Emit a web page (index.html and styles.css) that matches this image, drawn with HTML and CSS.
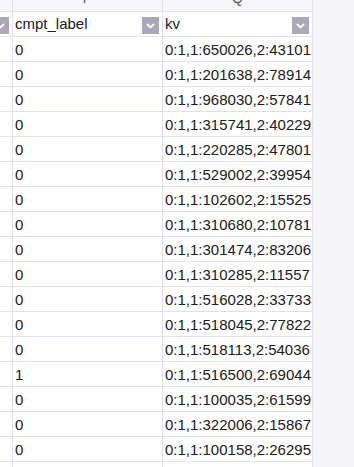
FILE: index.html
```html
<!DOCTYPE html>
<html>
<head>
<meta charset="utf-8">
<link rel="stylesheet" href="styles.css">
</head>
<body>
<div class="sheet">
  <div class="cell letter"></div>
  <div class="cell letter"><span>P</span></div>
  <div class="cell letter"><span>Q</span></div>
  <div class="blank"></div>

  <div class="cell head head-o"><span class="btn"><svg viewBox="0 0 17 17"><path d="M5 7 L8.5 10.5 L12 7" /></svg></span></div>
  <div class="cell head"><span class="label">cmpt_label</span><span class="btn"><svg viewBox="0 0 17 17"><path d="M5 7 L8.5 10.5 L12 7" /></svg></span></div>
  <div class="cell head"><span class="label">kv</span><span class="btn"><svg viewBox="0 0 17 17"><path d="M5 7 L8.5 10.5 L12 7" /></svg></span></div>
  <div class="blank"></div>

  <div class="cell"></div><div class="cell">0</div><div class="cell">0:1,1:650026,2:43101</div><div class="blank"></div>
  <div class="cell"></div><div class="cell">0</div><div class="cell">0:1,1:201638,2:78914</div><div class="blank"></div>
  <div class="cell"></div><div class="cell">0</div><div class="cell">0:1,1:968030,2:57841</div><div class="blank"></div>
  <div class="cell"></div><div class="cell">0</div><div class="cell">0:1,1:315741,2:40229</div><div class="blank"></div>
  <div class="cell"></div><div class="cell">0</div><div class="cell">0:1,1:220285,2:47801</div><div class="blank"></div>
  <div class="cell"></div><div class="cell">0</div><div class="cell">0:1,1:529002,2:39954</div><div class="blank"></div>
  <div class="cell"></div><div class="cell">0</div><div class="cell">0:1,1:102602,2:15525</div><div class="blank"></div>
  <div class="cell"></div><div class="cell">0</div><div class="cell">0:1,1:310680,2:10781</div><div class="blank"></div>
  <div class="cell"></div><div class="cell">0</div><div class="cell">0:1,1:301474,2:83206</div><div class="blank"></div>
  <div class="cell"></div><div class="cell">0</div><div class="cell">0:1,1:310285,2:11557</div><div class="blank"></div>
  <div class="cell"></div><div class="cell">0</div><div class="cell">0:1,1:516028,2:33733</div><div class="blank"></div>
  <div class="cell"></div><div class="cell">0</div><div class="cell">0:1,1:518045,2:77822</div><div class="blank"></div>
  <div class="cell"></div><div class="cell">0</div><div class="cell">0:1,1:518113,2:54036</div><div class="blank"></div>
  <div class="cell"></div><div class="cell">1</div><div class="cell">0:1,1:516500,2:69044</div><div class="blank"></div>
  <div class="cell"></div><div class="cell">0</div><div class="cell">0:1,1:100035,2:61599</div><div class="blank"></div>
  <div class="cell"></div><div class="cell">0</div><div class="cell">0:1,1:322006,2:15867</div><div class="blank"></div>
  <div class="cell"></div><div class="cell">0</div><div class="cell">0:1,1:100158,2:26295</div><div class="blank"></div>
  <div class="cell"></div><div class="cell"></div><div class="cell"></div><div class="blank"></div>
</div>
</body>
</html>
```
FILE: styles.css
```css
html, body {
  margin: 0;
  padding: 0;
  background: #ffffff;
  overflow: hidden;
}
.sheet {
  display: grid;
  grid-template-columns: 13px 150px 150px 1fr;
  grid-template-rows: 12px 25px;
  grid-auto-rows: 25px;
  width: 354px;
  height: 467px;
  overflow: hidden;
  font-family: "Liberation Sans", Arial, sans-serif;
  font-size: 15px;
  color: #202020;
}
.cell {
  box-sizing: border-box;
  border-right: 1px solid #e1e1ee;
  border-bottom: 1px solid #e1e1ee;
  background: #ffffff;
  padding-left: 2px;
  display: flex;
  align-items: center;
  white-space: nowrap;
  overflow: hidden;
}
.blank {
  background: #f5f5f8;
}
.cell.letter {
  background: #f6f6f8;
  justify-content: center;
  align-items: flex-start;
  padding-left: 0;
  color: #555;
  font-size: 14px;
  line-height: 14px;
}
.cell.letter span {
  margin-top: -9px;
}
.cell.head {
  justify-content: space-between;
  padding-right: 3px;
}
.cell.head-o {
  justify-content: flex-end;
  padding-left: 0;
}
.label {
  line-height: 20px;
}
.btn {
  width: 17px;
  height: 17px;
  background: #a9a9b9;
  display: block;
  flex: none;
  margin-top: 2px;
}
.btn svg {
  display: block;
  width: 17px;
  height: 17px;
}
.btn path {
  fill: none;
  stroke: #ffffff;
  stroke-width: 1.8;
}
```
